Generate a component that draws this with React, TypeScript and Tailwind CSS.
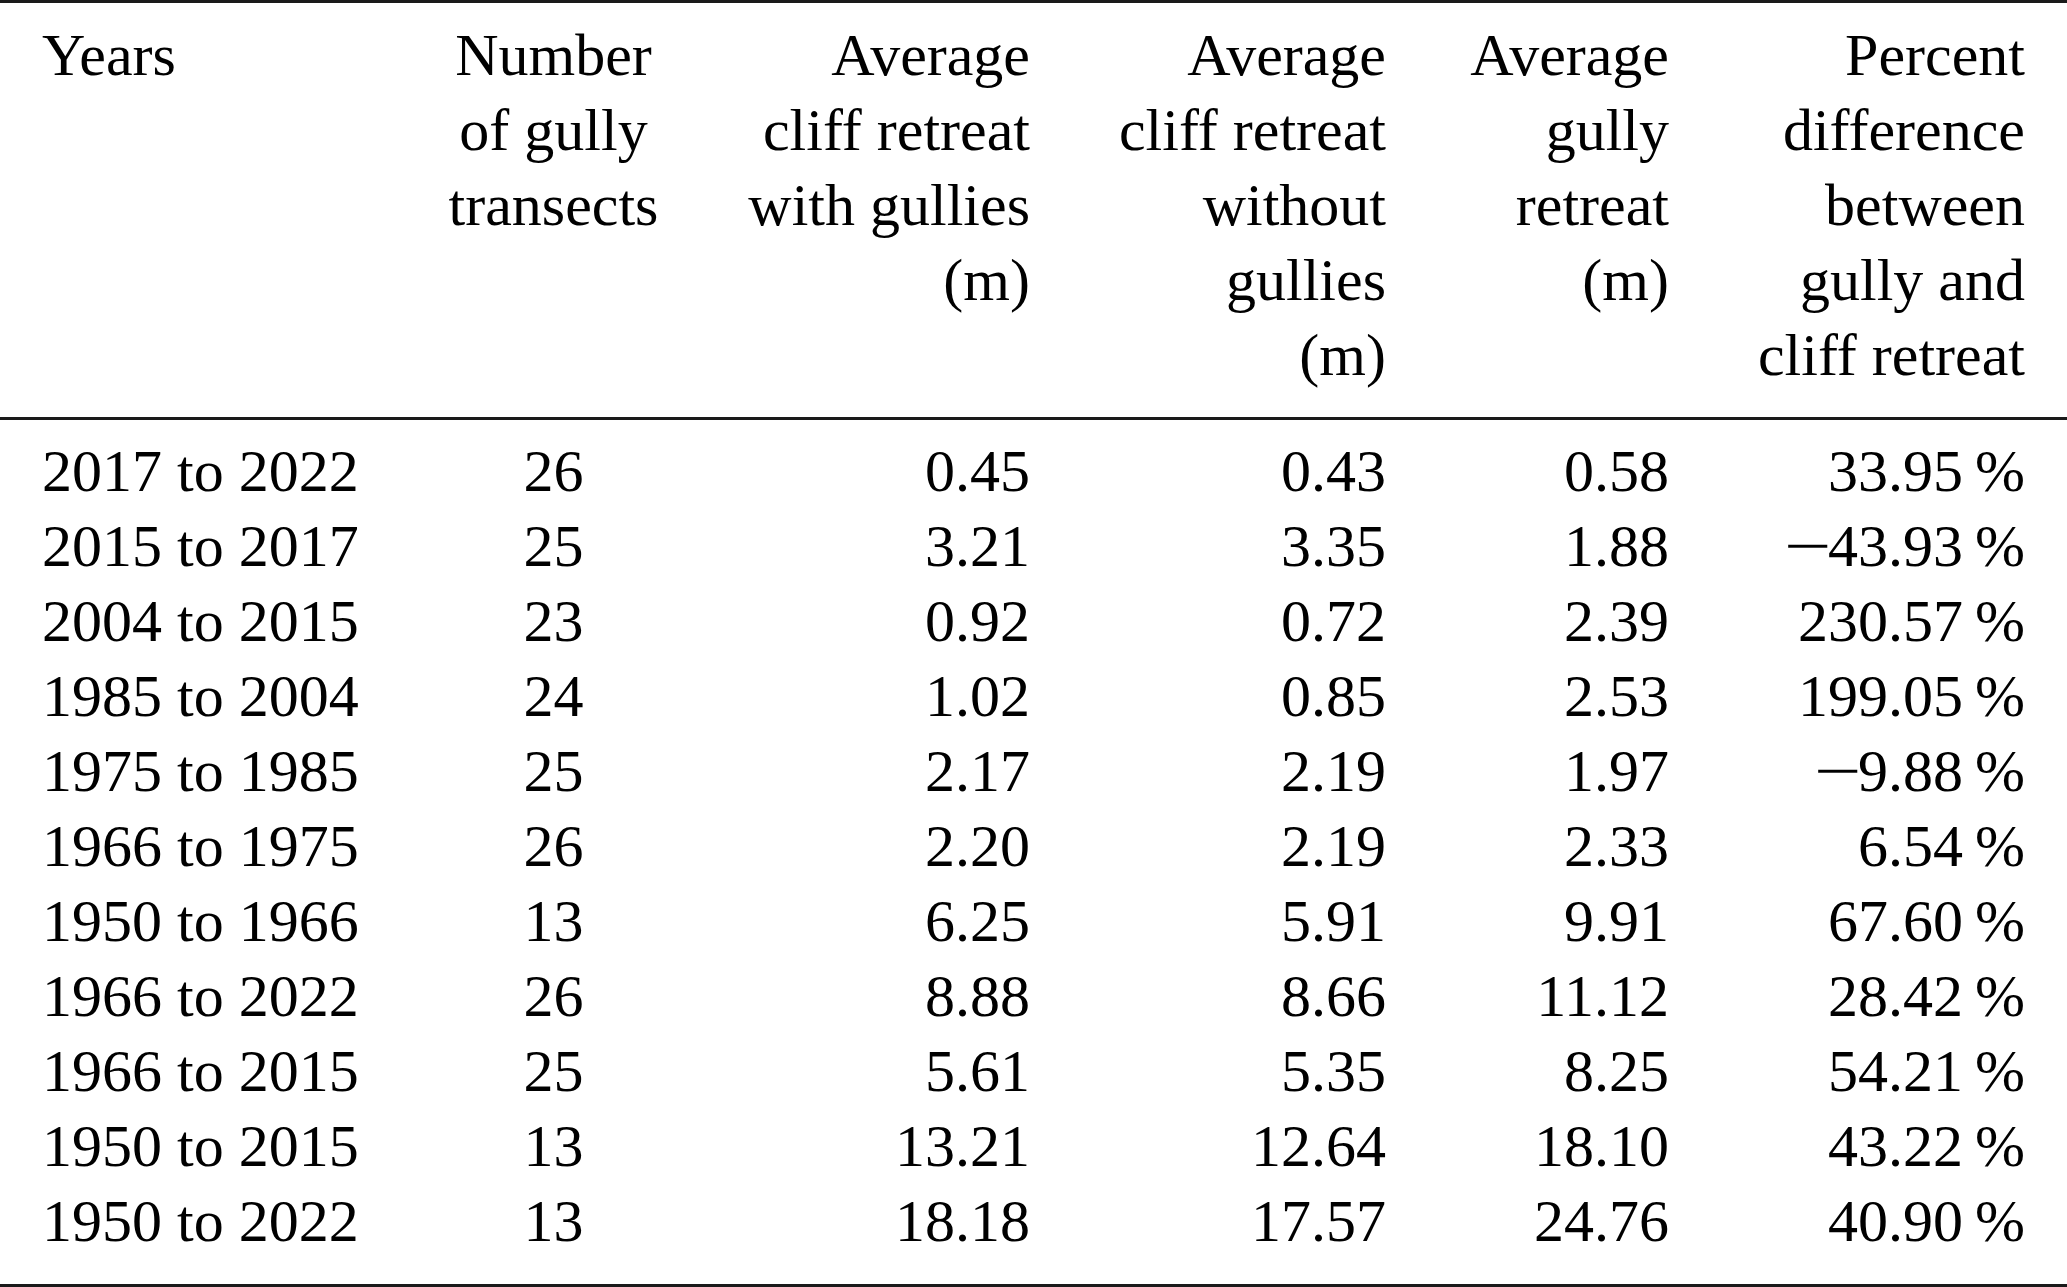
const headers = [
  { lines: ['Years'], align: 'text-left' },
  { lines: ['Number', 'of gully', 'transects'], align: 'text-center' },
  { lines: ['Average', 'cliff retreat', 'with gullies', '(m)'], align: 'text-right' },
  { lines: ['Average', 'cliff retreat', 'without', 'gullies', '(m)'], align: 'text-right' },
  { lines: ['Average', 'gully', 'retreat', '(m)'], align: 'text-right' },
  { lines: ['Percent', 'difference', 'between', 'gully and', 'cliff retreat'], align: 'text-right' },
];

const aligns = ['text-left', 'text-center', 'text-right', 'text-right', 'text-right', 'text-right'];

// years, transects, with gullies, without gullies, gully retreat, percent
const rows: string[][] = [
  ['2017 to 2022', '26', '0.45', '0.43', '0.58', '33.95'],
  ['2015 to 2017', '25', '3.21', '3.35', '1.88', '-43.93'],
  ['2004 to 2015', '23', '0.92', '0.72', '2.39', '230.57'],
  ['1985 to 2004', '24', '1.02', '0.85', '2.53', '199.05'],
  ['1975 to 1985', '25', '2.17', '2.19', '1.97', '-9.88'],
  ['1966 to 1975', '26', '2.20', '2.19', '2.33', '6.54'],
  ['1950 to 1966', '13', '6.25', '5.91', '9.91', '67.60'],
  ['1966 to 2022', '26', '8.88', '8.66', '11.12', '28.42'],
  ['1966 to 2015', '25', '5.61', '5.35', '8.25', '54.21'],
  ['1950 to 2015', '13', '13.21', '12.64', '18.10', '43.22'],
  ['1950 to 2022', '13', '18.18', '17.57', '24.76', '40.90'],
];

const grid = 'grid grid-cols-[405px_297px_370px_356px_283px_356px]';

function Percent({ value }: { value: string }) {
  const neg = value.startsWith('-');
  return (
    <>
      {neg && (
        <span className="inline-block w-[44px] text-left">
          <span className="inline-block scale-x-[1.4] origin-left">{'\u2212'}</span>
        </span>
      )}
      {neg ? value.slice(1) : value}
      {'\u2009%'}
    </>
  );
}

export default function App() {
  return (
    <div className="w-[2067px] h-[1287px] bg-white text-black font-['Liberation_Serif','Times_New_Roman',serif] text-[60px] leading-[75px]">
      <div className="h-[3px] bg-[#1a1a1a]" />

      {/* header */}
      <div className={`${grid} pt-[15px] pb-[24px]`}>
        {headers.map((h, i) => (
          <div key={i} className={`px-[42px] ${h.align}`}>
            {h.lines.map((l) => (
              <div key={l} className="whitespace-nowrap">
                {l}
              </div>
            ))}
          </div>
        ))}
      </div>

      <div className="h-[3px] bg-[#1a1a1a]" />

      {/* body */}
      <div className="pt-[14px] pb-[25px]">
        {rows.map((r) => (
          <div key={r[0]} className={grid}>
            {r.map((cell, i) => (
              <div key={i} className={`px-[42px] whitespace-nowrap ${aligns[i]}`}>
                {i === 5 ? <Percent value={cell} /> : cell}
              </div>
            ))}
          </div>
        ))}
      </div>

      <div className="h-[3px] bg-[#1a1a1a]" />
    </div>
  );
}
